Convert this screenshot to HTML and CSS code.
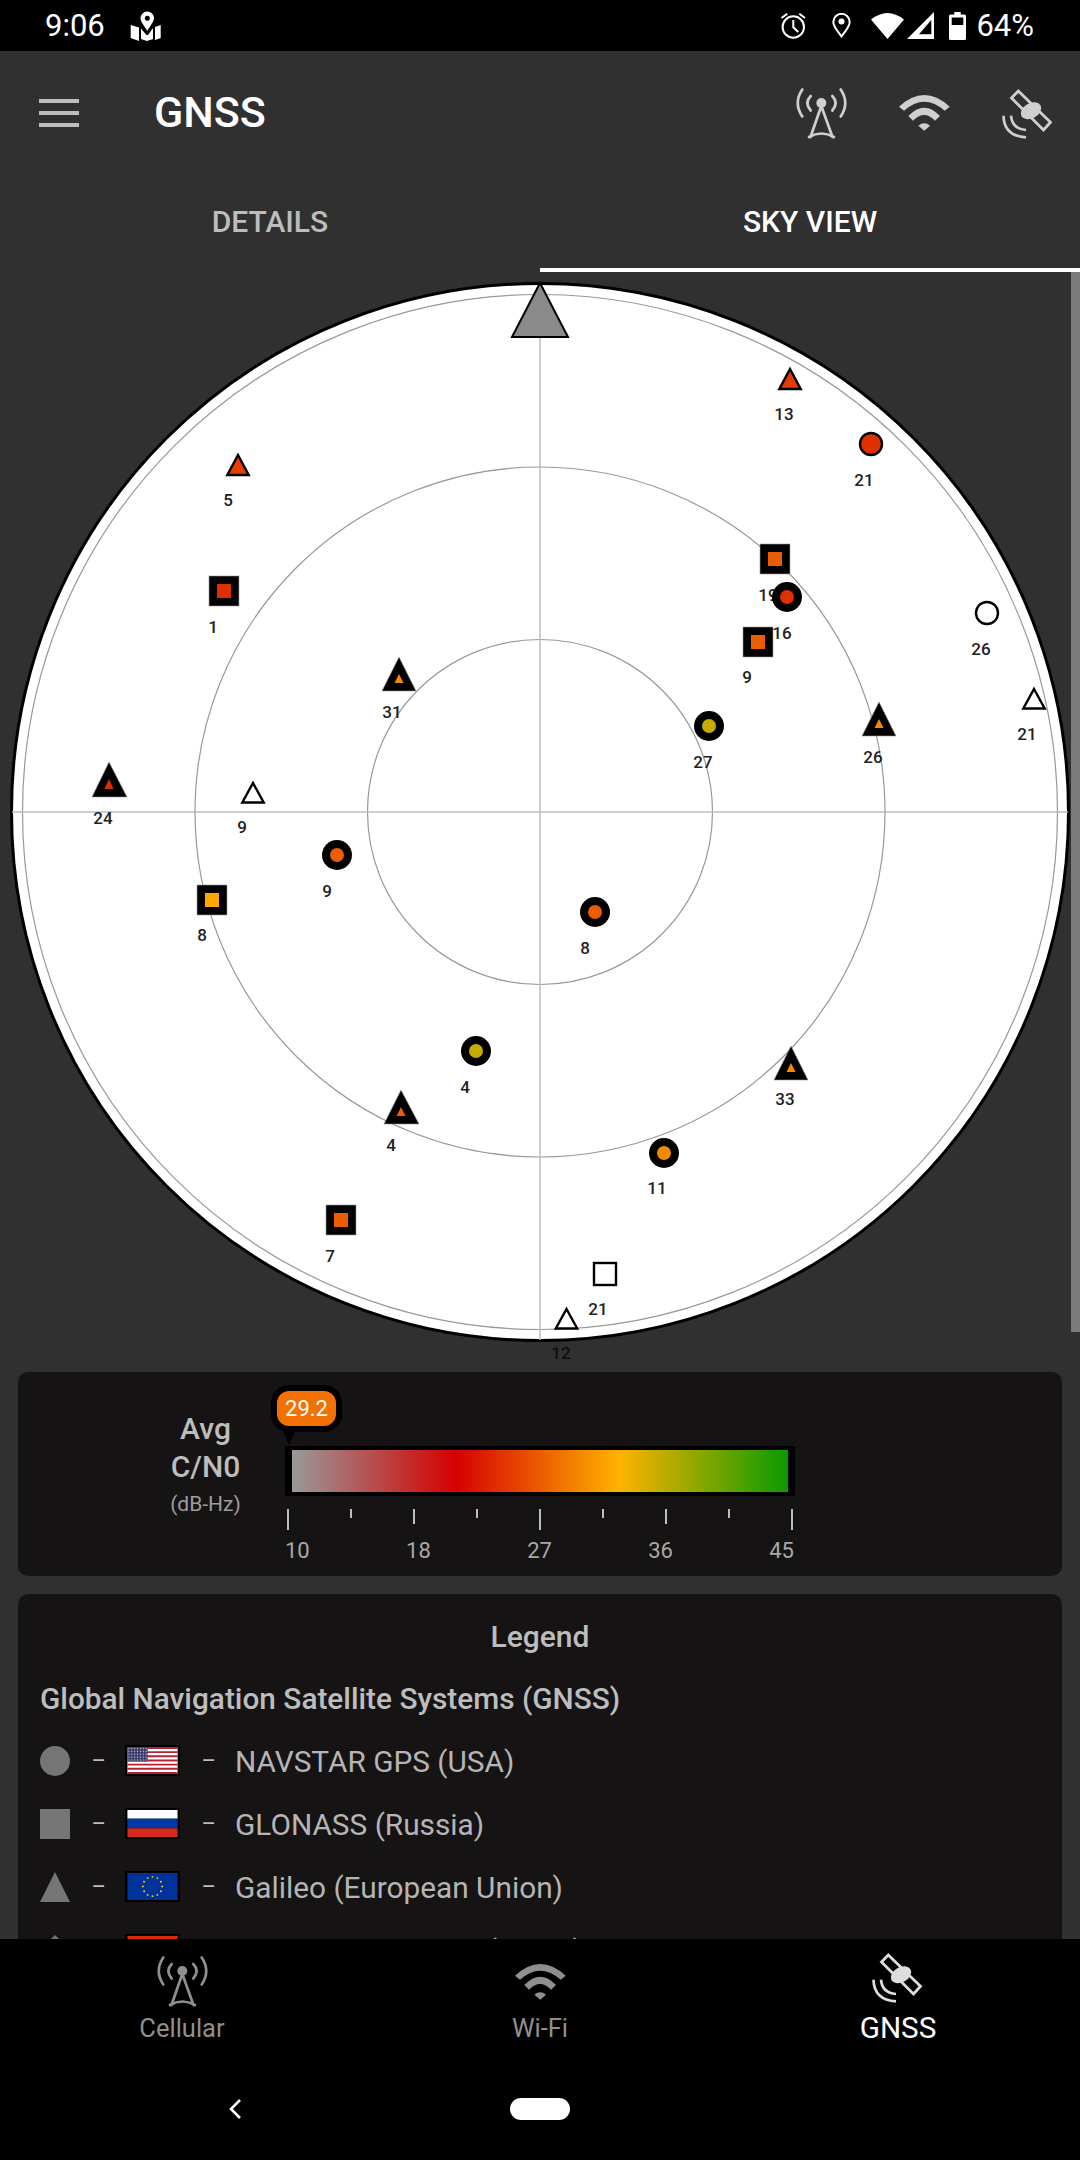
FILE: index.html
```html
<!DOCTYPE html>
<html lang="en">

<head>
    <meta charset="UTF-8">
    <meta name="viewport" content="width=device-width, initial-scale=1.0">
    <title>GNSS</title>
    <link rel="stylesheet" href="styles.css">
</head>

<body>
    <svg class="defs" width="0" height="0">
        <symbol id="icon-tower" viewBox="0 0 51 51">
            <g fill="none" stroke="currentColor" stroke-width="2.700" stroke-linecap="round">
                <path d="M6.300 1.500Q-2.800 15 6.300 28.500M44.700 1.500Q53.800 15 44.700 28.500" />
                <path d="M14.700 8Q8 15 14.700 22.500M36.300 8Q43 15 36.300 22.500" />
                <path d="M25.300 18L14.500 49M25.300 18L36.500 49M13 49Q25.300 42 38 49" />
            </g>
            <circle cx="25.300" cy="15" r="5" fill="currentColor" />
        </symbol>
        <symbol id="icon-wifi" viewBox="0 0 51 36">
            <path fill="currentColor" d="M0 11.700Q25.300 -11.700 50.700 11.700L45.700 15.700Q25.300 -2.300 5 15.700Z" />
            <path fill="currentColor" d="M9.300 21Q25.300 4.400 41 21L36 25.700Q25.300 14.300 14 25.700Z" />
            <path fill="currentColor" d="M19.300 30.700Q25.300 25.900 31 30.700L25.300 35.700Z" />
        </symbol>
        <symbol id="icon-sat" viewBox="0 0 52 51">
            <path fill="none" stroke="currentColor" stroke-width="2.800" d="M16.300 3L48.500 34.300L41.500 42L9.500 10Z" />
            <ellipse cx="29" cy="22.700" rx="11" ry="7.500" transform="rotate(-30 29 22.700)" fill="currentColor" />
            <path fill="none" stroke="currentColor" stroke-width="2.700" d="M1.500 27.700Q2 48 24 49.300M9 27.700Q10 41 24 42" />
        </symbol>
    </svg>

    <div class="status-bar">
        <span class="clock">9:06</span>
        <svg class="st-map" viewBox="0 0 31 30">
            <path fill="#ffffff" fill-rule="evenodd" d="M17.300 0.500A6.800 6.800 0 0 0 10.500 7.300C10.500 11 14.500 15 17.300 20C20 15 24 11 24 7.300A6.800 6.800 0 0 0 17.300 0.500ZM17.300 4.800A2.500 2.500 0 1 1 17.300 9.800A2.500 2.500 0 1 1 17.300 4.800Z" />
            <path fill="#ffffff" d="M0.700 14L9 16.500V30L0.700 27ZM11 17.500L16.500 24H18L23 17V28L17 30L11 28ZM25 16L30.700 14V27L25 29Z" />
        </svg>
        <span class="status-right">
            <svg class="st-alarm" viewBox="0 0 27 26">
                <circle cx="13.300" cy="14" r="10.700" fill="none" stroke="#ffffff" stroke-width="2" />
                <path fill="none" stroke="#ffffff" stroke-width="2" d="M13.300 7V14.300L18.300 19M1.500 5L7.300 0.800M25 5L19.300 0.800" />
            </svg>
            <svg class="st-pin" viewBox="0 0 19 25">
                <path fill="none" stroke="#ffffff" stroke-width="2" d="M9.500 23.500C6.500 19 1.300 14 1.300 9A8.200 8.200 0 0 1 17.700 9C17.700 14 12.500 19 9.500 23.500Z" />
                <circle cx="9.500" cy="8.500" r="3" fill="#ffffff" />
            </svg>
            <svg class="st-wifi" viewBox="0 0 33 26">
                <path fill="#ffffff" d="M0 6.500Q16.500 -6.500 33 6.500L16.500 26Z" />
            </svg>
            <svg class="st-signal" viewBox="0 0 27 27">
                <path fill="#ffffff" d="M27 0V27H0Z" />
                <path fill="#000000" d="M12 22.300L24.300 8V22.300Z" />
            </svg>
            <svg class="st-battery" viewBox="0 0 17 28">
                <path fill="#ffffff" d="M5.300 0H11.700V2.500H15.500A1.500 1.500 0 0 1 17 4V26.500A1.500 1.500 0 0 1 15.500 28H1.500A1.500 1.500 0 0 1 0 26.500V4A1.500 1.500 0 0 1 1.500 2.500H5.300Z" />
                <rect x="2.700" y="5.500" width="11.600" height="7.500" fill="#000000" />
            </svg>
            <span class="battery-text">64%</span>
        </span>
    </div>

    <header class="toolbar">
        <div class="hamburger"><i></i><i></i><i></i></div>
        <h1 class="title">GNSS</h1>
        <div class="toolbar-icons">
            <svg class="ic-tower"><use href="#icon-tower" /></svg>
            <svg class="ic-wifi"><use href="#icon-wifi" /></svg>
            <svg class="ic-sat"><use href="#icon-sat" /></svg>
        </div>
    </header>

    <nav class="tabs">
        <div class="tab">DETAILS</div>
        <div class="tab tab-active">SKY VIEW</div>
    </nav>

    <main class="content">
        <div class="scrollbar"></div>

        <svg class="sky" viewBox="0 272 1080 1100">
            <circle class="sky-disc" cx="540" cy="812" r="528.500" />
            <circle class="sky-ring" cx="540" cy="812" r="517.500" />
            <circle class="sky-ring" cx="540" cy="812" r="345" />
            <circle class="sky-ring" cx="540" cy="812" r="172.500" />
            <path class="sky-axis" d="M540 282V1340M12 812H1068" />
            <path class="north" d="M540 283L568 337H512Z" />

            <!-- triangles: outlined -->
            <path class="outline c-tri13" d="M790 369L800.700 389H779.300Z" />
            <text class="sat-label" x="784" y="420">13</text>
            <path class="outline c-tri5" d="M238 455L248.700 475H227.300Z" />
            <text class="sat-label" x="228" y="506">5</text>
            <path class="outline c-none" d="M1034 689L1044.700 708.500H1023.300Z" />
            <text class="sat-label" x="1027" y="740">21</text>
            <path class="outline c-none" d="M253 783L263.700 802.500H242.300Z" />
            <text class="sat-label" x="242" y="833">9</text>
            <path class="outline c-none" d="M566.500 1309L577.200 1328.500H555.800Z" />
            <text class="sat-label sat-label-off" x="561" y="1359">12</text>

            <!-- triangles: used in fix -->
            <path class="used" d="M879 702L896 736H862Z" />
            <path class="c-amber2" d="M879 719L883.500 728H874.500Z" />
            <text class="sat-label" x="873" y="763">26</text>
            <path class="used" d="M399 657L416 691H382Z" />
            <path class="c-amber2" d="M399 674L403.500 683H394.500Z" />
            <text class="sat-label" x="392" y="718">31</text>
            <path class="used" d="M109 762L127 797H92Z" />
            <path class="c-red" d="M109 779L113.500 789H104.500Z" />
            <text class="sat-label" x="103" y="824">24</text>
            <path class="used" d="M401 1090L419 1124H384Z" />
            <path class="c-orange" d="M401 1107L405.500 1116H396.500Z" />
            <text class="sat-label" x="391" y="1151">4</text>
            <path class="used" d="M791 1046L808 1080H774Z" />
            <path class="c-amber2" d="M791 1063L795.500 1072H786.500Z" />
            <text class="sat-label" x="785" y="1105">33</text>

            <!-- squares -->
            <rect class="used" x="760" y="544" width="30" height="30" />
            <rect class="c-orange" x="768" y="552" width="14" height="14" />
            <text class="sat-label" x="768" y="601">19</text>
            <rect class="used" x="743" y="627" width="30" height="30" />
            <rect class="c-orange" x="751" y="635" width="14" height="14" />
            <text class="sat-label" x="747" y="683">9</text>
            <rect class="used" x="209" y="576" width="30" height="30" />
            <rect class="c-red" x="217" y="584" width="14" height="14" />
            <text class="sat-label" x="213" y="633">1</text>
            <rect class="used" x="197" y="885" width="30" height="30" />
            <rect class="c-amber" x="205" y="893" width="14" height="14" />
            <text class="sat-label" x="202" y="941">8</text>
            <rect class="used" x="326" y="1205" width="30" height="30" />
            <rect class="c-orange" x="334" y="1213" width="14" height="14" />
            <text class="sat-label" x="330" y="1262">7</text>
            <rect class="outline c-none" x="594" y="1263" width="22" height="22" />
            <text class="sat-label" x="598" y="1315">21</text>

            <!-- circles -->
            <circle class="outline c-red" cx="871" cy="444" r="11" />
            <text class="sat-label" x="864" y="486">21</text>
            <circle class="outline c-none" cx="987" cy="613" r="11" />
            <text class="sat-label" x="981" y="655">26</text>
            <circle class="used-c" cx="787" cy="597" r="15" />
            <circle class="c-red" cx="787" cy="597" r="7" />
            <text class="sat-label" x="782" y="639">16</text>
            <circle class="used-c" cx="709" cy="726" r="15" />
            <circle class="c-olive" cx="709" cy="726" r="7" />
            <text class="sat-label" x="703" y="768">27</text>
            <circle class="used-c" cx="337" cy="855" r="15" />
            <circle class="c-orange" cx="337" cy="855" r="7" />
            <text class="sat-label" x="327" y="897">9</text>
            <circle class="used-c" cx="595" cy="912" r="15" />
            <circle class="c-orange" cx="595" cy="912" r="7" />
            <text class="sat-label" x="585" y="954">8</text>
            <circle class="used-c" cx="476" cy="1051" r="15" />
            <circle class="c-olive" cx="476" cy="1051" r="7" />
            <text class="sat-label" x="465" y="1093">4</text>
            <circle class="used-c" cx="664" cy="1153" r="15" />
            <circle class="c-amber2" cx="664" cy="1153" r="7" />
            <text class="sat-label" x="657" y="1194">11</text>
        </svg>

        <section class="card gauge">
            <div class="gauge-label">
                <div class="gauge-name">Avg</div>
                <div class="gauge-name">C/N0</div>
                <div class="gauge-unit">(dB-Hz)</div>
            </div>
            <div class="gauge-scale">
                <div class="balloon">29.2</div>
                <div class="bar-frame"><div class="bar"></div></div>
                <div class="ticks">
                    <i class="tick-l"></i><i class="tick-s"></i><i class="tick-m"></i><i class="tick-s"></i><i class="tick-l"></i><i class="tick-s"></i><i class="tick-m"></i><i class="tick-s"></i><i class="tick-l"></i>
                </div>
                <div class="tick-labels">
                    <span>10</span><span>18</span><span>27</span><span>36</span><span>45</span>
                </div>
            </div>
        </section>

        <section class="card legend">
            <h2 class="legend-title">Legend</h2>
            <h3 class="legend-heading">Global Navigation Satellite Systems (GNSS)</h3>

            <div class="legend-row">
                <svg class="shape" viewBox="0 0 30 30"><circle cx="15" cy="15" r="15" /></svg>
                <span class="dash">–</span>
                <svg class="flag" viewBox="0 0 52 28">
                    <defs>
                        <pattern id="stars" width="3" height="3" patternUnits="userSpaceOnUse">
                            <rect width="3" height="3" fill="#3c3b6e" />
                            <circle cx="1.500" cy="1.500" r="0.700" fill="#cccccc" />
                        </pattern>
                    </defs>
                    <rect width="52" height="28" fill="#ffffff" />
                    <path fill="#b22234" d="M0 0H52V2H0ZM0 4.300H52V6.300H0ZM0 8.600H52V10.600H0ZM0 13H52V15H0ZM0 17.300H52V19.300H0ZM0 21.600H52V23.600H0ZM0 26H52V28H0Z" />
                    <rect width="21" height="15" fill="url(#stars)" />
                </svg>
                <span class="dash">–</span>
                <span class="legend-name">NAVSTAR GPS (USA)</span>
            </div>

            <div class="legend-row">
                <svg class="shape" viewBox="0 0 30 30"><rect width="30" height="30" /></svg>
                <span class="dash">–</span>
                <svg class="flag" viewBox="0 0 52 28">
                    <rect width="52" height="9" fill="#ffffff" />
                    <rect y="9" width="52" height="10" fill="#0039a6" />
                    <rect y="19" width="52" height="9" fill="#d52b1e" />
                </svg>
                <span class="dash">–</span>
                <span class="legend-name">GLONASS (Russia)</span>
            </div>

            <div class="legend-row">
                <svg class="shape" viewBox="0 0 30 30"><path d="M15 0L30 30H0Z" /></svg>
                <span class="dash">–</span>
                <svg class="flag" viewBox="0 0 52 28">
                    <rect width="52" height="28" fill="#003399" />
                    <g fill="#ffcc00">
                        <circle cx="26" cy="4" r="1" /><circle cx="31" cy="5.300" r="1" /><circle cx="34.700" cy="9" r="1" />
                        <circle cx="36" cy="14" r="1" /><circle cx="34.700" cy="19" r="1" /><circle cx="31" cy="22.700" r="1" />
                        <circle cx="26" cy="24" r="1" /><circle cx="21" cy="22.700" r="1" /><circle cx="17.300" cy="19" r="1" />
                        <circle cx="16" cy="14" r="1" /><circle cx="17.300" cy="9" r="1" /><circle cx="21" cy="5.300" r="1" />
                    </g>
                </svg>
                <span class="dash">–</span>
                <span class="legend-name">Galileo (European Union)</span>
            </div>

            <div class="legend-row">
                <svg class="shape" viewBox="0 0 30 30"><path d="M15 0L30 15L15 30L0 15Z" /></svg>
                <span class="dash">–</span>
                <svg class="flag" viewBox="0 0 52 28">
                    <rect width="52" height="28" fill="#de2910" />
                    <circle cx="9" cy="7" r="3" fill="#ffde00" />
                </svg>
                <span class="dash">–</span>
                <span class="legend-name">BeiDou/COMPASS (China)</span>
            </div>
        </section>
    </main>

    <footer class="bottom-nav">
        <div class="nav-item">
            <svg class="ic-tower"><use href="#icon-tower" /></svg>
            <span class="nav-text">Cellular</span>
        </div>
        <div class="nav-item">
            <svg class="ic-wifi"><use href="#icon-wifi" /></svg>
            <span class="nav-text">Wi-Fi</span>
        </div>
        <div class="nav-item nav-active">
            <svg class="ic-sat"><use href="#icon-sat" /></svg>
            <span class="nav-text">GNSS</span>
        </div>
    </footer>

    <div class="system-nav">
        <svg class="back" viewBox="0 0 12 20">
            <path fill="none" stroke="#ffffff" stroke-width="2.600" d="M11 1L2 10L11 19" />
        </svg>
        <div class="home-pill"></div>
    </div>
</body>

</html>
```

FILE: styles.css
```css
* {
    box-sizing: border-box;
}

body {
    font-family: Roboto, "Liberation Sans", sans-serif;
    margin: 0;
    width: 1080px;
    height: 2160px;
    display: flex;
    flex-direction: column;
    overflow: hidden;
    background-color: #303030;
    color: #bdbdbd;
}

.defs {
    position: absolute;
}

/* status bar */
.status-bar {
    height: 51px;
    flex: none;
    display: flex;
    align-items: center;
    padding: 0 46px 0 45px;
    background-color: #000000;
    color: #ffffff;
}

.clock {
    font-size: 31px;
    width: 85px;
}

.st-map {
    width: 31px;
    height: 30px;
}

.status-right {
    margin-left: auto;
    display: flex;
    align-items: center;
}

.st-alarm {
    width: 27px;
    height: 26px;
    margin-right: 25px;
}

.st-pin {
    width: 19px;
    height: 25px;
    margin-right: 20px;
}

.st-wifi {
    width: 33px;
    height: 26px;
    margin-right: 3px;
}

.st-signal {
    width: 27px;
    height: 27px;
    margin-right: 15px;
}

.st-battery {
    width: 17px;
    height: 28px;
    margin-right: 10px;
}

.battery-text {
    font-size: 31px;
}

/* toolbar + tabs */
.toolbar {
    height: 124px;
    flex: none;
    display: flex;
    align-items: center;
    padding: 0 26px 0 39px;
    color: #cfcfcf;
}

.hamburger {
    width: 40px;
    display: flex;
    flex-direction: column;
    gap: 8px;
    margin-right: 75px;
}

.hamburger i {
    height: 4px;
    background-color: #bdbdbd;
}

.title {
    margin: 0 0 2px;
    font-size: 43px;
    font-weight: 500;
    color: #ffffff;
}

.toolbar-icons {
    margin-left: auto;
    display: flex;
    align-items: center;
}

.ic-tower {
    width: 51px;
    height: 51px;
}

.ic-wifi {
    width: 51px;
    height: 36px;
}

.ic-sat {
    width: 52px;
    height: 51px;
}

.toolbar-icons .ic-wifi {
    margin: 0 52px 0 52px;
}

.tabs {
    height: 97px;
    flex: none;
    display: flex;
}

.tab {
    flex: 1;
    display: flex;
    align-items: center;
    justify-content: center;
    padding-bottom: 5px;
    font-size: 30px;
    font-weight: 500;
    color: #bdbdbd;
}

.tab-active {
    color: #ffffff;
    border-bottom: 4px solid #ffffff;
    padding-bottom: 1px;
}

/* scrolling content */
.content {
    flex: 1;
    min-height: 0;
    overflow: hidden;
    position: relative;
}

.scrollbar {
    position: absolute;
    top: 0;
    right: 0;
    width: 9px;
    height: 1060px;
    background-color: #7b7b7b;
}

.sky {
    display: block;
    width: 1080px;
    height: 1100px;
}

.sky-disc {
    fill: #ffffff;
    stroke: #000000;
    stroke-width: 3;
}

.sky-ring {
    fill: none;
    stroke: #999999;
    stroke-width: 1.2;
}

.sky-axis {
    fill: none;
    stroke: #bdbdbd;
    stroke-width: 1.5;
}

.north {
    fill: #8a8a8a;
    stroke: #000000;
    stroke-width: 2;
}

.sat-label {
    font-size: 17px;
    font-weight: 500;
    fill: #222222;
    text-anchor: middle;
}

.sat-label-off {
    fill: #0c0c0c;
}

.outline {
    stroke: #000000;
    stroke-width: 2.4;
}

.used {
    fill: #000000;
    stroke: #999999;
    stroke-width: 0.6;
}

.used-c {
    fill: #000000;
}

.c-none {
    fill: #ffffff;
}

.c-red {
    fill: #e03000;
}

.c-tri13 {
    fill: #e43c00;
}

.c-tri5 {
    fill: #e64000;
}

.c-orange {
    fill: #ec5c00;
}

.c-amber {
    fill: #ffa800;
}

.c-amber2 {
    fill: #f28a00;
}

.c-olive {
    fill: #c6ae00;
}

/* cards */
.card {
    margin: 0 18px 18px;
    background-color: #151313;
    border-radius: 10px;
}

.gauge {
    height: 204px;
    display: flex;
    padding-top: 26px;
}

.gauge-label {
    width: 267px;
    padding: 12px 24px 0 132px;
    text-align: center;
    white-space: nowrap;
}

.gauge-name {
    font-size: 30px;
    font-weight: 500;
    line-height: 38px;
}

.gauge-unit {
    font-size: 21px;
    line-height: 36px;
    color: #9e9e9e;
}

.gauge-scale {
    width: 510px;
    position: relative;
    padding-top: 48px;
}

.balloon {
    position: absolute;
    top: -13px;
    left: -14px;
    width: 71px;
    height: 47px;
    border: 6px solid #000000;
    border-radius: 18px;
    background-color: #f37100;
    color: #ffffff;
    font-size: 22px;
    line-height: 35px;
    text-align: center;
}

.balloon::after {
    content: "";
    position: absolute;
    left: 4px;
    top: 35px;
    border-style: solid;
    border-width: 19px 8px 0;
    border-color: #000000 transparent transparent;
}

.bar-frame {
    height: 50px;
    padding: 4px 7px;
    background-color: #000000;
}

.bar {
    height: 42px;
    background: linear-gradient(to right, #999999 0%, #d60000 33%, #ffb300 66%, #0a9a00 100%);
}

.ticks {
    display: flex;
    justify-content: space-between;
    align-items: flex-start;
    width: 506px;
    margin: 13px 0 0 2px;
    height: 30px;
}

.ticks i {
    width: 2px;
    background-color: #bdbdbd;
}

.tick-l {
    height: 21px;
}

.tick-m {
    height: 15px;
}

.tick-s {
    height: 9px;
}

.tick-labels {
    display: flex;
    justify-content: space-between;
    width: 509px;
    font-size: 22px;
    line-height: 24px;
    color: #a8a8a8;
}

.legend {
    padding: 22px 22px 0;
    height: 420px;
}

.legend-title {
    margin: 0 0 20px;
    font-size: 30px;
    font-weight: 500;
    line-height: 42px;
    text-align: center;
}

.legend-heading {
    margin: 0 0 9px;
    font-size: 29.8px;
    font-weight: 500;
    line-height: 42px;
}

.legend-row {
    height: 63px;
    display: flex;
    align-items: center;
    gap: 21.5px;
}

.shape {
    width: 30px;
    height: 30px;
    fill: #757575;
}

.dash {
    width: 12px;
    font-size: 22px;
    text-align: center;
}

.flag {
    width: 55px;
    height: 31px;
    padding: 2px;
    background-color: #000000;
}

.legend-name {
    font-size: 29.8px;
    padding-top: 2px;
    color: #b5b5b5;
}

/* bottom navigation */
.bottom-nav {
    height: 121px;
    flex: none;
    display: flex;
    padding: 0 3px;
    background-color: #000000;
    color: #8f8f8f;
}

.nav-item {
    flex: 1;
    display: flex;
    flex-direction: column;
    align-items: center;
    justify-content: flex-end;
    padding-bottom: 16px;
}

.nav-text {
    font-size: 25.5px;
    line-height: 32px;
}

.nav-item .ic-wifi {
    margin-bottom: 12px;
}

.nav-item .ic-tower {
    margin-bottom: 5px;
}

.nav-active {
    color: #ffffff;
}

.nav-active .nav-text {
    font-size: 29.7px;
}

.nav-active .ic-sat {
    margin-bottom: 9px;
    color: #dddddd;
}

.system-nav {
    height: 100px;
    flex: none;
    position: relative;
    display: flex;
    align-items: flex-start;
    justify-content: center;
    padding-top: 38px;
    background-color: #000000;
}

.back {
    position: absolute;
    left: 229px;
    top: 39px;
    width: 12px;
    height: 20px;
}

.home-pill {
    width: 60px;
    height: 22px;
    border-radius: 11px;
    background-color: #ffffff;
}
```
